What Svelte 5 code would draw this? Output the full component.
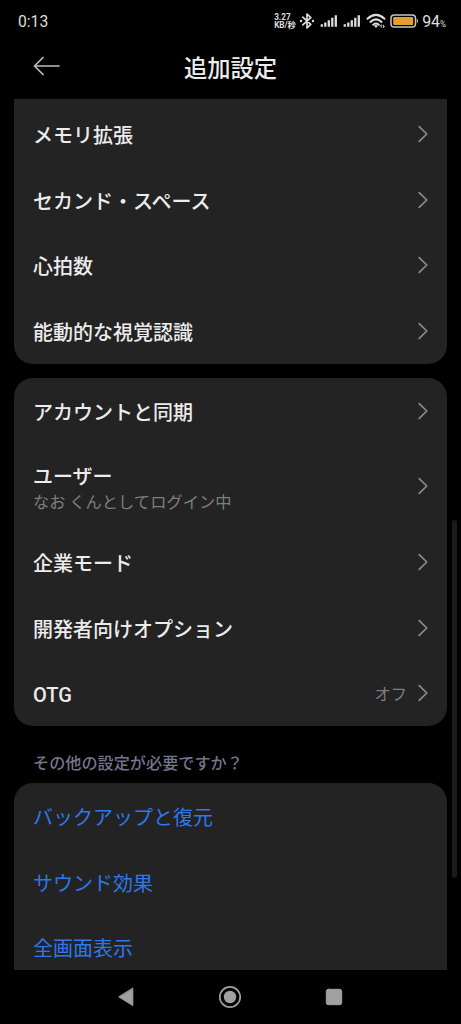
<script lang="ts">
  interface Item {
    title: string
    note?: string
    value?: string
  }

  const features: Item[] = [
    { title: 'メモリ拡張' },
    { title: 'セカンド・スペース' },
    { title: '心拍数' },
    { title: '能動的な視覚認識' },
  ]

  const system: Item[] = [
    { title: 'アカウントと同期' },
    { title: 'ユーザー', note: 'なお くんとしてログイン中' },
    { title: '企業モード' },
    { title: '開発者向けオプション' },
    { title: 'OTG', value: 'オフ' },
  ]

  const links = ['バックアップと復元', 'サウンド効果', '全画面表示']
</script>

{#snippet signal()}
  <svg class="signal" width="18" height="14" viewBox="0 0 18 14" aria-hidden="true">
    <path d="M1.8 10.2v2.5M5.3 8.4v4.3M8.8 6.2v6.5M12.3 3.8v8.9M15.8 1.2v11.5" />
  </svg>
{/snippet}

{#snippet rows(items: Item[])}
  {#each items as item}
    <li class="row" class:tall={item.note}>
      <div class="label">
        <span class="name">{item.title}</span>
        {#if item.note}
          <span class="note">{item.note}</span>
        {/if}
      </div>
      {#if item.value}
        <span class="value">{item.value}</span>
      {/if}
      <svg class="chevron" width="12" height="18" viewBox="0 0 12 18" aria-hidden="true">
        <path d="M2.2 1.6 9.8 9l-7.6 7.4" />
      </svg>
    </li>
  {/each}
{/snippet}

<div class="screen">
  <div class="status">
    <span class="clock">0:13</span>
    <div class="indicators">
      <span class="speed"><span>3.27</span><span>KB/秒</span></span>
      <svg class="bluetooth" width="16" height="16" viewBox="0 0 16 16" aria-hidden="true">
        <path d="M3.8 4.2 11.8 11.3 8 15V1l3.8 3.6-8 7.2" />
        <circle cx="2" cy="8" r="1.2" />
        <circle cx="14" cy="8" r="1.2" />
      </svg>
      {@render signal()}
      {@render signal()}
      <svg class="wifi" width="20" height="16" viewBox="0 0 20 16" aria-hidden="true">
        <path d="M1.5 5.8Q10-2 18.5 5.8M4.4 8.9q5.6-5 11.2 0M7.2 11.7q2.8-2.3 5.6 0" />
        <path class="dot" d="M8 12.7q2-1.4 4 0L10 15z" />
        <path class="traffic" d="M15.2 12.2v2M17.4 12.2v2M14.2 13l1-1M18.4 13.4l-1 1" />
      </svg>
      <svg class="battery" width="29" height="14" viewBox="0 0 29 14" aria-hidden="true">
        <rect class="case" x="1" y="1" width="24.5" height="12" rx="3.3" />
        <rect class="charge" x="3.2" y="3" width="20" height="8" rx="1.2" />
        <path d="M26.8 4.6q2.4 2.4 0 4.8z" />
      </svg>
      <span class="percent">94<small>%</small></span>
    </div>
  </div>

  <header>
    <svg class="back" width="28" height="20" viewBox="0 0 28 20" aria-hidden="true">
      <path d="M10 1.5 1.5 10l8.5 8.5M1.5 10H26" />
    </svg>
    <h1>追加設定</h1>
  </header>

  <main>
    <ul class="card continued">{@render rows(features)}</ul>
    <ul class="card">{@render rows(system)}</ul>

    <h2>その他の設定が必要ですか？</h2>
    <ul class="card links">
      {#each links as link}
        <li class="row link">{link}</li>
      {/each}
    </ul>
    <div class="scrollbar"></div>
  </main>

  <nav>
    <svg width="16" height="20" viewBox="0 0 16 20" aria-label="戻る">
      <path d="M14.8 1.4v17.2L1 10z" />
    </svg>
    <svg width="24" height="24" viewBox="0 0 24 24" aria-label="ホーム">
      <circle class="ring" cx="12" cy="12" r="10.2" />
      <circle class="core" cx="12" cy="12" r="6.2" />
    </svg>
    <svg width="18" height="18" viewBox="0 0 18 18" aria-label="履歴">
      <rect x="1.3" y="1.3" width="15.4" height="15.4" rx="2" />
    </svg>
  </nav>
</div>

<style>
  :global(body) {
    background: #000;
  }

  .screen {
    --surface: #232323;
    --text: #ececec;
    --muted: #7e7e7e;

    display: flex;
    flex-direction: column;
    width: 461px;
    height: 1024px;
    overflow: hidden;
    background: #000;
    color: var(--text);
    font-family: 'Noto Sans CJK JP', sans-serif;
  }

  svg {
    flex: none;
    fill: none;
    stroke-linecap: round;
    stroke-linejoin: round;
  }

  /* Status bar */
  .status {
    display: flex;
    align-items: center;
    justify-content: space-between;
    height: 42px;
    padding: 0 15px 0 18px;
    color: #dedede;
    font-family: Roboto, 'Noto Sans CJK JP', sans-serif;
  }

  .clock {
    padding-top: 2px;
    font-size: 15.7px;
    font-weight: 400;
    line-height: 20px;
  }

  .indicators {
    display: flex;
    align-items: center;
  }

  .speed {
    display: flex;
    flex-direction: column;
    width: 25px;
    font-size: 8.2px;
    font-weight: 700;
    line-height: 8px;
    white-space: nowrap;
  }

  .bluetooth {
    stroke: #dedede;
    stroke-width: 1.7;
    margin-right: 5px;
  }

  .bluetooth circle {
    fill: #dedede;
    stroke: none;
  }

  .signal {
    stroke: #dedede;
    stroke-width: 2.3;
    stroke-linecap: butt;
    margin-right: 5px;
  }

  .wifi {
    stroke: #dedede;
    stroke-width: 2;
    margin-right: 4px;
  }

  .wifi .dot {
    fill: #dedede;
    stroke: none;
  }

  .wifi .traffic {
    stroke-width: 0.9;
  }

  .battery {
    fill: #c8c8c8;
    margin-right: 3px;
  }

  .battery .case {
    fill: none;
    stroke: #c8c8c8;
    stroke-width: 1.5;
  }

  .battery .charge {
    fill: #e2a02c;
  }

  .percent {
    padding-top: 3px;
    font-size: 15.9px;
    font-weight: 400;
    line-height: 20px;
  }

  .percent small {
    font-size: 8.2px;
  }

  /* Title bar */
  header {
    display: grid;
    grid-template-columns: 28px 1fr 28px;
    align-items: center;
    height: 57px;
    padding: 0 33px 8px;
    box-sizing: border-box;
  }

  .back {
    margin-bottom: 2px;
    stroke: #bdbdbd;
    stroke-width: 1.7;
  }

  h1 {
    margin: 0;
    font-size: 23.3px;
    font-weight: 500;
    line-height: 34px;
    text-align: center;
  }

  /* Scrolling list */
  main {
    position: relative;
    height: 871px;
    overflow: hidden;
  }

  .card {
    margin: 0 14px 14px;
    padding: 0;
    list-style: none;
    background: var(--surface);
    border-radius: 19px;
  }

  .continued {
    padding-top: 2px;
    border-radius: 0 0 19px 19px;
  }

  .links {
    padding-bottom: 66px;
  }

  .row {
    display: flex;
    align-items: center;
    height: 65.7px;
    padding: 0 18px 0 19px;
  }

  .row.tall {
    height: 85.6px;
  }

  .label {
    display: flex;
    flex: 1;
    flex-direction: column;
    padding-top: 4px;
  }

  .name,
  .link {
    font-family: Roboto, 'Noto Sans CJK JP', sans-serif;
    font-size: 20px;
    font-weight: 500;
    line-height: 28px;
  }

  .link {
    box-sizing: border-box;
    padding-top: 4px;
    color: #2d78ee;
    font-weight: 400;
  }

  .note,
  .value {
    color: var(--muted);
    font-size: 16.3px;
    line-height: 24px;
  }

  .note {
    margin-top: -2px;
  }

  .value {
    margin-right: 10px;
  }

  .chevron {
    stroke: #8c8c8c;
    stroke-width: 1.7;
  }

  h2 {
    margin: 23px 33px 8px;
    color: #75758c;
    font-size: 16.15px;
    font-weight: 500;
    line-height: 26px;
  }

  .scrollbar {
    position: absolute;
    top: 421px;
    right: 4px;
    width: 5px;
    height: 358px;
    border-radius: 3px;
    background: #1b1b1b;
  }

  /* System navigation */
  nav {
    display: flex;
    align-items: center;
    justify-content: space-between;
    height: 54px;
    padding: 0 118px;
  }

  nav svg {
    fill: #a0a0a0;
    stroke: #a0a0a0;
    stroke-width: 1;
  }

  nav .ring {
    fill: none;
    stroke-width: 1.7;
  }

  nav .core {
    stroke: none;
  }
</style>
